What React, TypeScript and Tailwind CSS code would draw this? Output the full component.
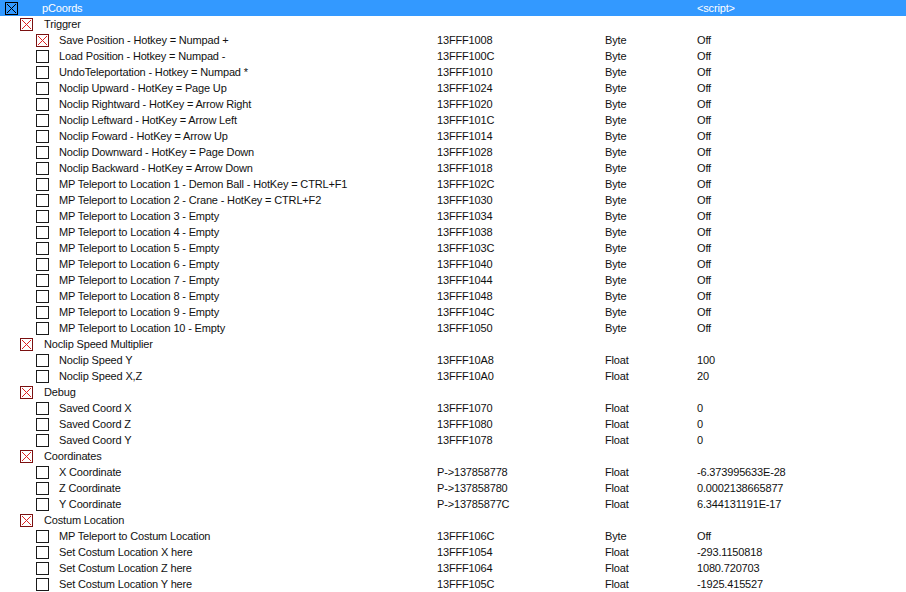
import React from "react";

type Row = { level: number; desc: string; addr?: string; type?: string; value?: string; checked?: boolean; selected?: boolean };

const rows: Row[] = [
  { level: 0, desc: "pCoords", value: "<script>", checked: true, selected: true },
  { level: 1, desc: "Triggrer", checked: true },
  { level: 2, desc: "Save Position - Hotkey = Numpad +", addr: "13FFF1008", type: "Byte", value: "Off", checked: true },
  { level: 2, desc: "Load Position - Hotkey = Numpad -", addr: "13FFF100C", type: "Byte", value: "Off" },
  { level: 2, desc: "UndoTeleportation - Hotkey = Numpad *", addr: "13FFF1010", type: "Byte", value: "Off" },
  { level: 2, desc: "Noclip Upward - HotKey = Page Up", addr: "13FFF1024", type: "Byte", value: "Off" },
  { level: 2, desc: "Noclip Rightward - HotKey = Arrow Right", addr: "13FFF1020", type: "Byte", value: "Off" },
  { level: 2, desc: "Noclip Leftward - HotKey = Arrow Left", addr: "13FFF101C", type: "Byte", value: "Off" },
  { level: 2, desc: "Noclip Foward - HotKey = Arrow Up", addr: "13FFF1014", type: "Byte", value: "Off" },
  { level: 2, desc: "Noclip Downward  - HotKey = Page Down", addr: "13FFF1028", type: "Byte", value: "Off" },
  { level: 2, desc: "Noclip Backward - HotKey = Arrow Down", addr: "13FFF1018", type: "Byte", value: "Off" },
  { level: 2, desc: "MP Teleport to Location 1 - Demon Ball - HotKey = CTRL+F1", addr: "13FFF102C", type: "Byte", value: "Off" },
  { level: 2, desc: "MP Teleport to Location 2 - Crane - HotKey = CTRL+F2", addr: "13FFF1030", type: "Byte", value: "Off" },
  { level: 2, desc: "MP Teleport to Location 3 - Empty", addr: "13FFF1034", type: "Byte", value: "Off" },
  { level: 2, desc: "MP Teleport to Location 4 - Empty", addr: "13FFF1038", type: "Byte", value: "Off" },
  { level: 2, desc: "MP Teleport to Location 5 - Empty", addr: "13FFF103C", type: "Byte", value: "Off" },
  { level: 2, desc: "MP Teleport to Location 6 - Empty", addr: "13FFF1040", type: "Byte", value: "Off" },
  { level: 2, desc: "MP Teleport to Location 7 - Empty", addr: "13FFF1044", type: "Byte", value: "Off" },
  { level: 2, desc: "MP Teleport to Location 8 - Empty", addr: "13FFF1048", type: "Byte", value: "Off" },
  { level: 2, desc: "MP Teleport to Location 9 - Empty", addr: "13FFF104C", type: "Byte", value: "Off" },
  { level: 2, desc: "MP Teleport to Location 10 - Empty", addr: "13FFF1050", type: "Byte", value: "Off" },
  { level: 1, desc: "Noclip Speed Multiplier", checked: true },
  { level: 2, desc: "Noclip Speed Y", addr: "13FFF10A8", type: "Float", value: "100" },
  { level: 2, desc: "Noclip Speed X,Z", addr: "13FFF10A0", type: "Float", value: "20" },
  { level: 1, desc: "Debug", checked: true },
  { level: 2, desc: "Saved Coord X", addr: "13FFF1070", type: "Float", value: "0" },
  { level: 2, desc: "Saved Coord Z", addr: "13FFF1080", type: "Float", value: "0" },
  { level: 2, desc: "Saved Coord Y", addr: "13FFF1078", type: "Float", value: "0" },
  { level: 1, desc: "Coordinates", checked: true },
  { level: 2, desc: "X Coordinate", addr: "P->137858778", type: "Float", value: "-6.373995633E-28" },
  { level: 2, desc: "Z Coordinate", addr: "P->137858780", type: "Float", value: "0.0002138665877" },
  { level: 2, desc: "Y Coordinate", addr: "P->13785877C", type: "Float", value: "6.344131191E-17" },
  { level: 1, desc: "Costum Location", checked: true },
  { level: 2, desc: "MP Teleport to Costum Location", addr: "13FFF106C", type: "Byte", value: "Off" },
  { level: 2, desc: "Set Costum Location X here", addr: "13FFF1054", type: "Float", value: "-293.1150818" },
  { level: 2, desc: "Set Costum Location Z here", addr: "13FFF1064", type: "Float", value: "1080.720703" },
  { level: 2, desc: "Set Costum Location Y here", addr: "13FFF105C", type: "Float", value: "-1925.415527" },
];

function Box({ checked, selected }: { checked?: boolean; selected?: boolean }) {
  const border = selected ? "#000000" : checked ? "#7a1010" : "#1a1a1a";
  const cross = selected ? "#000000" : "#e02020";
  return (
    <svg width="13" height="13" viewBox="0 0 13 13" className="shrink-0 block">
      <rect x="0.5" y="0.5" width="12" height="12" fill={selected ? "none" : "#ffffff"} stroke={border} strokeWidth="1" />
      {checked && (
        <g stroke={cross} strokeWidth="1">
          <line x1="2" y1="2" x2="11" y2="11" />
          <line x1="11" y1="2" x2="2" y2="11" />
        </g>
      )}
    </svg>
  );
}

const boxMargin = ["ml-[5px]", "ml-[20px]", "ml-[36px]"];
const textMargin = ["ml-[24px]", "ml-[11px]", "ml-[10px]"];

export default function App() {
  return (
    <div
      className="w-[906px] h-[592px] bg-white overflow-hidden text-[11px] leading-none text-[#111] tracking-[-0.16px]"
      style={{ fontFamily: '"Liberation Sans", Arial, sans-serif' }}
    >
      {rows.map((r, i) => (
        <div
          key={i}
          className={
            "grid grid-cols-[437px_168px_92px_1fr] h-[16px] items-center " +
            (r.selected ? "bg-[#3399ff] text-white" : "")
          }
        >
          <div className="flex items-center whitespace-nowrap">
            <div className={boxMargin[r.level]}>
              <Box checked={r.checked} selected={r.selected} />
            </div>
            <span className={textMargin[r.level]}>{r.desc}</span>
          </div>
          <div className="whitespace-nowrap">{r.addr ?? ""}</div>
          <div className="whitespace-nowrap">{r.type ?? ""}</div>
          <div className="whitespace-nowrap">{r.value ?? ""}</div>
        </div>
      ))}
    </div>
  );
}
